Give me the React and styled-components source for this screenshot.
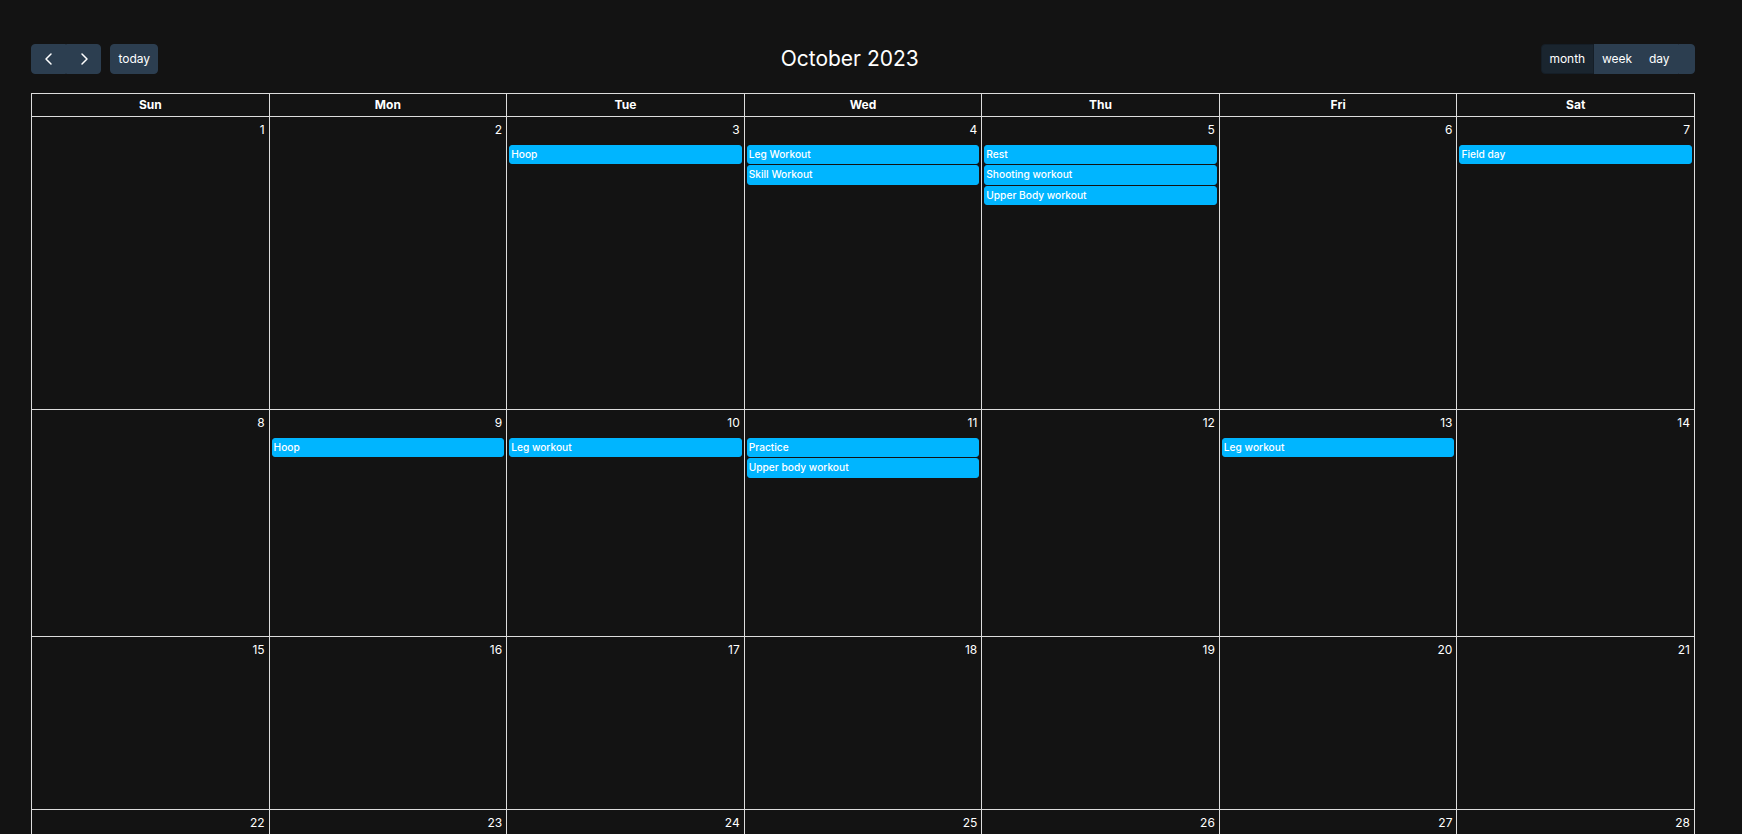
import React from "react";
import styled, { createGlobalStyle, css } from "styled-components";

const GlobalStyle = createGlobalStyle`
  html, body {
    margin: 0;
    padding: 0;
    background: #131313;
    overflow: hidden;
  }
  body {
    font-family: Inter, "Noto Sans", sans-serif;
    font-size: 12px;
    color: #fff;
  }
`;

const Page = styled.div`
  padding: 44px 47px 0 31px;
`;

const Toolbar = styled.div`
  display: flex;
  justify-content: space-between;
  align-items: center;
  margin-bottom: 19px;
`;

const Chunk = styled.div`
  display: flex;
  align-items: center;
`;

const ButtonGroup = styled.div`
  display: inline-flex;
  & + & {
    margin-left: 9px;
  }
`;

const Button = styled.button`
  font-family: inherit;
  font-size: 12px;
  line-height: 18px;
  color: #fff;
  background: ${p => (p.$active ? "#1a252f" : "#2c3e50")};
  border: 1px solid ${p => (p.$active ? "#151e27" : "#2c3e50")};
  padding: 5px 7.4px;
  height: 30px;
  min-width: ${p => p.$min || 0}px;
  display: inline-flex;
  align-items: center;
  justify-content: center;
  border-radius: 0;
  cursor: pointer;
  &:first-child {
    border-top-left-radius: 4px;
    border-bottom-left-radius: 4px;
  }
  &:last-child {
    border-top-right-radius: 4px;
    border-bottom-right-radius: 4px;
  }
  ${p =>
    p.$icon &&
    css`
      width: 35px;
      padding: 0;
    `}
`;

const Title = styled.h2`
  margin: 0;
  font-size: 21px;
  font-weight: 400;
  line-height: 1.3;
  color: #fff;
`;

const Grid = styled.div`
  border-top: 1px solid #ddd;
  border-left: 1px solid #ddd;
`;

const Row = styled.div`
  display: grid;
  grid-template-columns: repeat(7, 1fr);
  height: ${p => p.$h}px;
`;

const HeadCell = styled.div`
  border-right: 1px solid #ddd;
  border-bottom: 1px solid #ddd;
  text-align: center;
  font-weight: 700;
  line-height: 18px;
  padding: 2px 4px;
`;

const DayCell = styled.div`
  border-right: 1px solid #ddd;
  border-bottom: 1px solid #ddd;
  min-width: 0;
  overflow: hidden;
`;

const DayNumber = styled.div`
  text-align: right;
  padding: 4px;
  line-height: 18px;
  color: #fff;
  opacity: ${p => (p.$other ? 0.3 : 1)};
`;

const Events = styled.div`
  display: flex;
  flex-direction: column;
  gap: 1px;
  padding-top: 2px;
`;

const Event = styled.div`
  margin: 0 2px;
  background: #00b5ff;
  border: 1px solid #00b5ff;
  border-radius: 3px;
  padding: 1px 1px;
  font-size: 10.2px;
  font-weight: 500;
  line-height: 15.3px;
  color: #fff;
  white-space: nowrap;
  overflow: hidden;
`;

const Chevron = ({ dir }) => (
  <svg width="16" height="16" viewBox="0 0 16 16" fill="none">
    <path
      d={dir === "left" ? "M10 3 L5 8 L10 13" : "M6 3 L11 8 L6 13"}
      stroke="#fff"
      strokeWidth="1.5"
      strokeLinecap="round"
      strokeLinejoin="round"
    />
  </svg>
);

const days = ["Sun", "Mon", "Tue", "Wed", "Thu", "Fri", "Sat"];

const events = {
  3: ["Hoop"],
  4: ["Leg Workout", "Skill Workout"],
  5: ["Rest", "Shooting workout", "Upper Body workout"],
  7: ["Field day"],
  9: ["Hoop"],
  10: ["Leg workout"],
  11: ["Practice", "Upper body workout"],
  13: ["Leg workout"],
};

const rowHeights = [293, 227, 173, 173, 173, 173];

const weeks = rowHeights.map((h, w) =>
  Array.from({ length: 7 }, (_, d) => {
    const n = w * 7 + d + 1;
    if (n <= 31) return { n, other: false };
    return { n: n - 31, other: true };
  })
);

export default function App() {
  return (
    <>
      <GlobalStyle />
      <Page>
        <Toolbar>
          <Chunk>
            <ButtonGroup>
              <Button $icon aria-label="prev">
                <Chevron dir="left" />
              </Button>
              <Button $icon aria-label="next">
                <Chevron dir="right" />
              </Button>
            </ButtonGroup>
            <ButtonGroup>
              <Button>today</Button>
            </ButtonGroup>
          </Chunk>
          <Title>October 2023</Title>
          <Chunk>
            <ButtonGroup>
              <Button $active>month</Button>
              <Button>week</Button>
              <Button>day</Button>
              <Button $min={17} aria-label="list" />
            </ButtonGroup>
          </Chunk>
        </Toolbar>
        <Grid>
          <Row $h={23}>
            {days.map(d => (
              <HeadCell key={d}>{d}</HeadCell>
            ))}
          </Row>
          {weeks.map((week, i) => (
            <Row key={i} $h={rowHeights[i]}>
              {week.map(day => (
                <DayCell key={`${day.other}-${day.n}`}>
                  <DayNumber $other={day.other}>{day.n}</DayNumber>
                  <Events>
                    {!day.other &&
                      (events[day.n] || []).map((t, k) => (
                        <Event key={k}>{t}</Event>
                      ))}
                  </Events>
                </DayCell>
              ))}
            </Row>
          ))}
        </Grid>
      </Page>
    </>
  );
}
